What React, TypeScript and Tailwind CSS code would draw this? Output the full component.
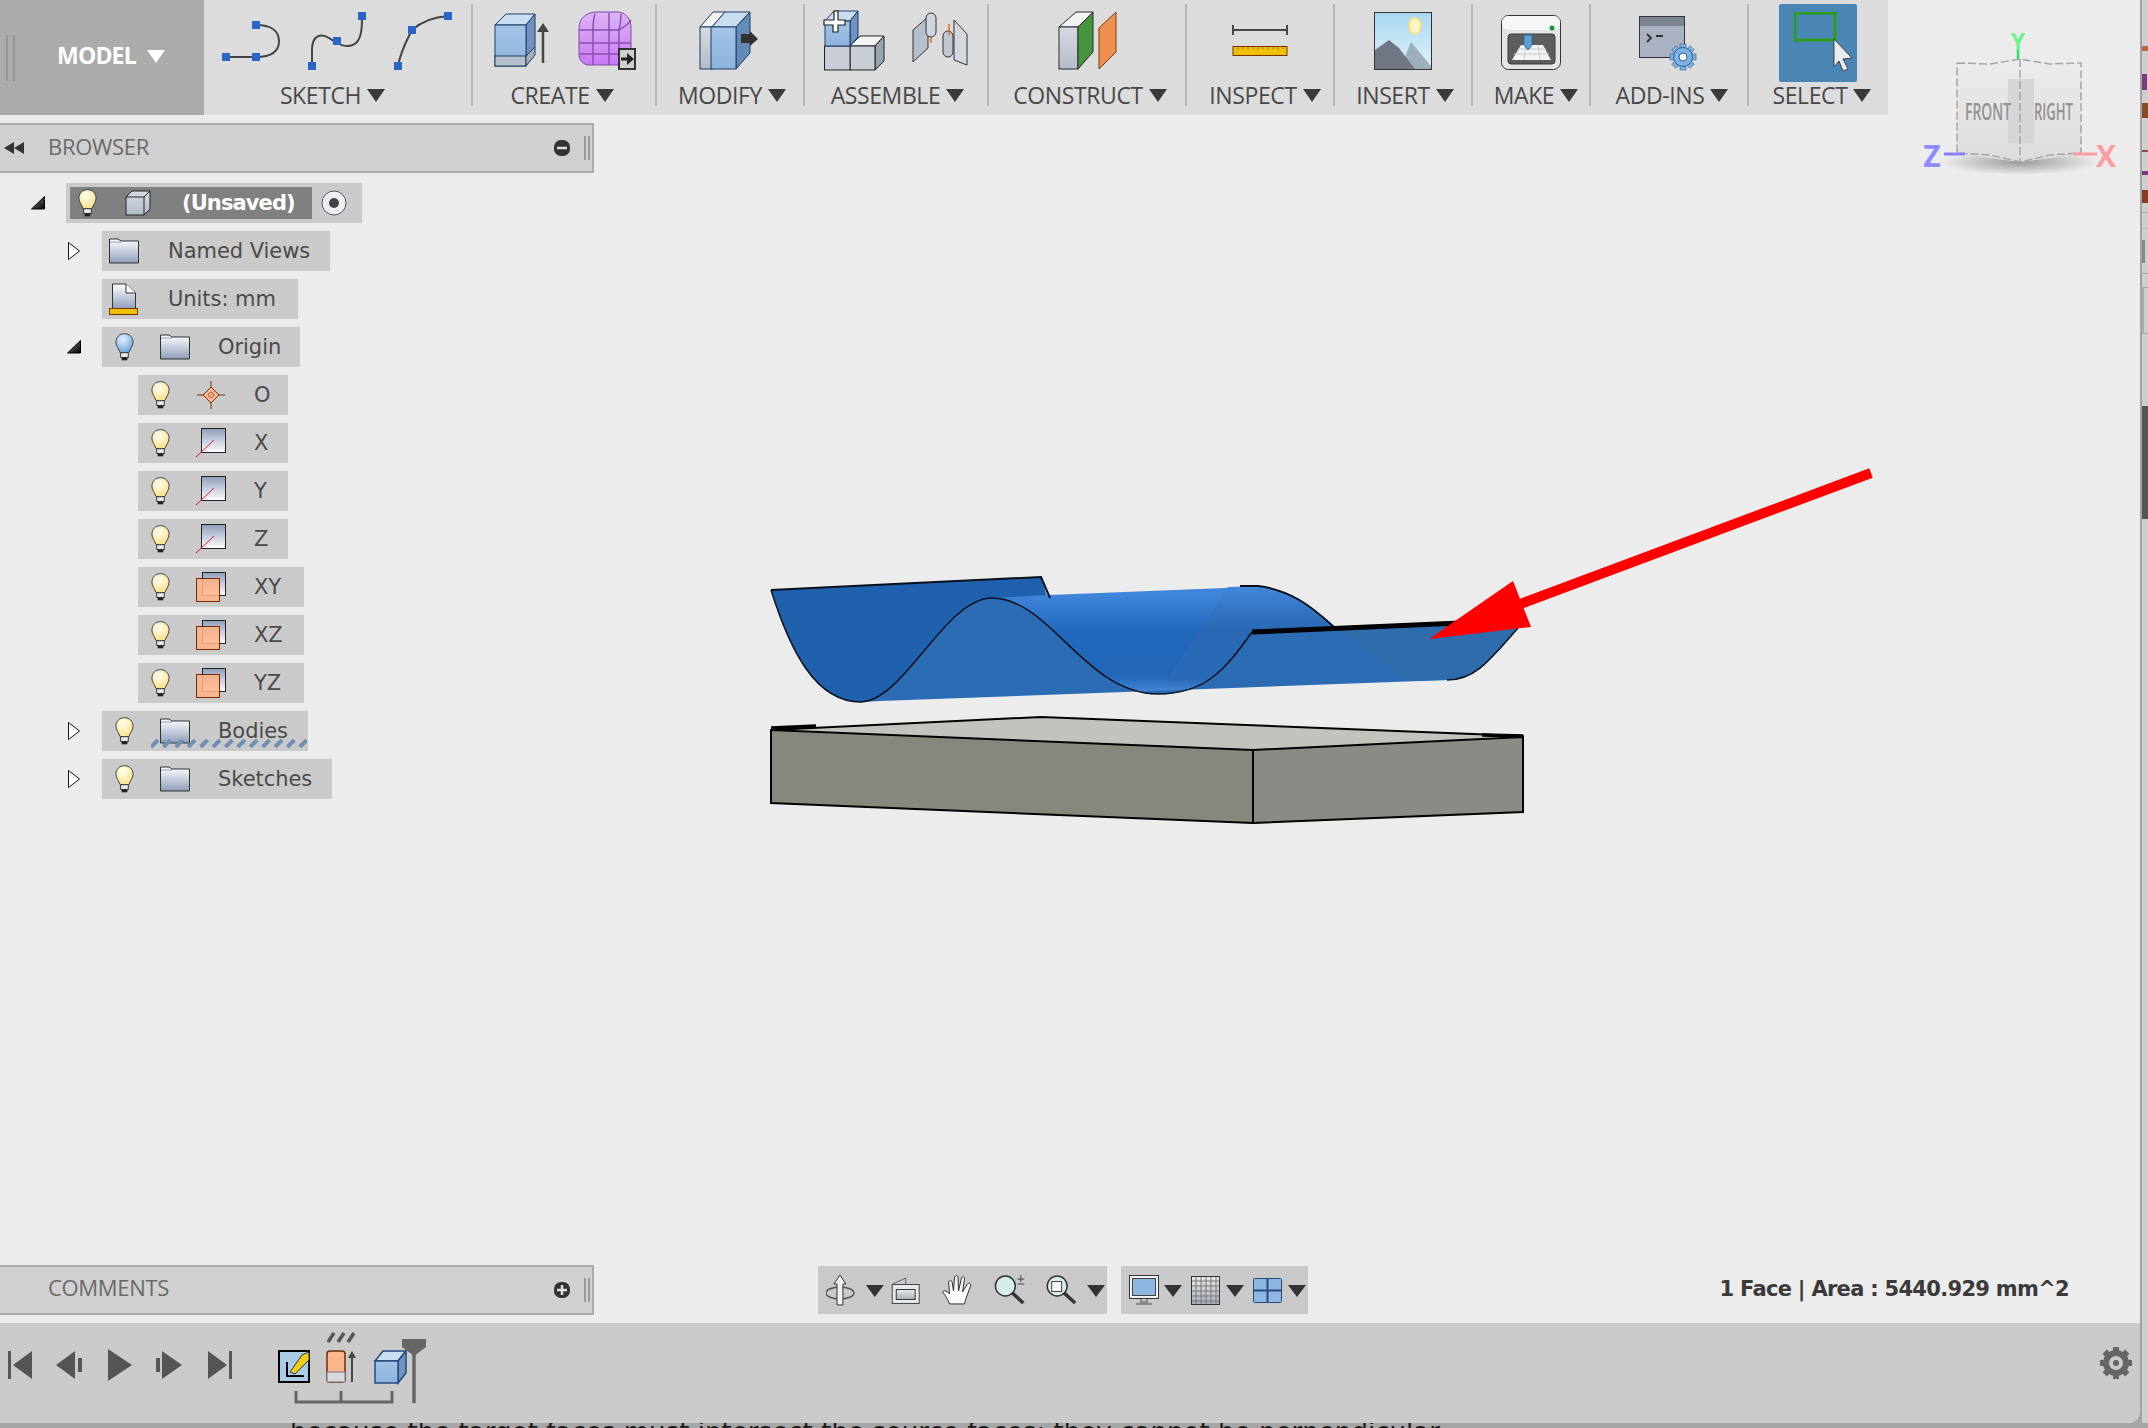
import type { ReactNode } from "react";

const Tri = ({ className = "" }: { className?: string }) => (
  <svg width="18" height="13" viewBox="0 0 18 13" className={className}>
    <polygon points="0,0 18,0 9,13" fill="#3a3a3a" />
  </svg>
);

const Sep = () => <div className="w-[2px] h-[102px] mt-1 bg-[#b6b6b6] shrink-0" />;

const Tool = ({ label, width, shift, children }: { label: string; width: string; shift: string; children: ReactNode }) => (
  <div className={`flex flex-col items-center shrink-0 ${width}`}>
    <div className="h-[83px] flex justify-center w-full">{children}</div>
    <div className={`flex items-center h-6 gap-[6px] ${shift}`}>
      <span className="text-[23px] leading-6 text-[#484848] font-['Open_Sans',sans-serif] tracking-[-0.4px]">{label}</span>
      <Tri />
    </div>
  </div>
);

const Defs = () => (
  <svg width="0" height="0" className="absolute">
    <defs>
      <radialGradient id="bulbY" cx="40%" cy="30%" r="70%">
        <stop offset="0" stopColor="#fffff4" />
        <stop offset="1" stopColor="#fbe38a" />
      </radialGradient>
      <radialGradient id="bulbB" cx="40%" cy="30%" r="70%">
        <stop offset="0" stopColor="#e4f2ff" />
        <stop offset="1" stopColor="#6ea7dc" />
      </radialGradient>
      <linearGradient id="fold" x1="0" y1="0" x2="0" y2="1">
        <stop offset="0" stopColor="#ffffff" />
        <stop offset="1" stopColor="#8f9db8" />
      </linearGradient>
      <linearGradient id="plane" x1="0" y1="0" x2="0" y2="1">
        <stop offset="0" stopColor="#8f9db8" />
        <stop offset="1" stopColor="#ffffff" />
      </linearGradient>
      <linearGradient id="blueFront" x1="0" y1="0" x2="0" y2="1">
        <stop offset="0" stopColor="#a3c4e6" />
        <stop offset="1" stopColor="#8db3dc" />
      </linearGradient>
      <linearGradient id="grayFront" x1="0" y1="0" x2="0" y2="1">
        <stop offset="0" stopColor="#d6dae0" />
        <stop offset="1" stopColor="#b4bcc8" />
      </linearGradient>
      <linearGradient id="purple" x1="0" y1="0" x2="0" y2="1">
        <stop offset="0" stopColor="#dcb4f4" />
        <stop offset="1" stopColor="#c878f4" />
      </linearGradient>
      <linearGradient id="sky" x1="0" y1="0" x2="0" y2="1">
        <stop offset="0" stopColor="#a8d9f2" />
        <stop offset="1" stopColor="#dff1fa" />
      </linearGradient>
      <linearGradient id="midSurf" gradientUnits="userSpaceOnUse" x1="0" y1="595" x2="0" y2="696">
        <stop offset="0" stopColor="#3f86da" />
        <stop offset="0.35" stopColor="#2268bd" />
        <stop offset="0.8" stopColor="#2166b8" />
        <stop offset="1" stopColor="#4e8ee0" />
      </linearGradient>
      <linearGradient id="midRight" gradientUnits="userSpaceOnUse" x1="0" y1="585" x2="0" y2="696">
        <stop offset="0" stopColor="#4187da" />
        <stop offset="0.4" stopColor="#2a68b4" />
        <stop offset="0.85" stopColor="#2a6ab8" />
        <stop offset="1" stopColor="#5490de" />
      </linearGradient>
      <linearGradient id="cube" x1="0" y1="0" x2="0" y2="1">
        <stop offset="0" stopColor="#ececec" />
        <stop offset="1" stopColor="#dcdcdc" />
      </linearGradient>
      <radialGradient id="cubeShadow" cx="50%" cy="50%" r="50%">
        <stop offset="0" stopColor="#9a9a9a" />
        <stop offset="1" stopColor="#ececec" />
      </radialGradient>
      <linearGradient id="screen" x1="0" y1="0" x2="0" y2="1">
        <stop offset="0" stopColor="#e9e9e9" />
        <stop offset="1" stopColor="#a8adb8" />
      </linearGradient>
    </defs>
  </svg>
);

const SketchIcons = () => (
  <svg width="234" height="62" viewBox="222 10 234 62" className="mt-[10px]" fill="none">
    <g stroke="#444" strokeWidth="2">
      <path d="M227 57H257C275 57 280 50 280 41C280 31 272 25 257 25" />
      <path d="M313 66V50C313 35 322 33 330 38C340 45 350 50 358 42C363 36 363 25 363 16" />
      <path d="M399 66C402 50 408 40 413 30C422 22 435 17 449 16" />
    </g>
    <g fill="#2a66c8">
      <rect x="223" y="53" width="8" height="8" />
      <rect x="253" y="53" width="8" height="8" />
      <rect x="253" y="21" width="8" height="8" />
      <rect x="309" y="62" width="8" height="8" />
      <rect x="334" y="37" width="8" height="8" />
      <rect x="359" y="12" width="8" height="8" />
      <rect x="395" y="62" width="8" height="8" />
      <rect x="409" y="26" width="8" height="8" />
      <rect x="445" y="12" width="8" height="8" />
    </g>
  </svg>
);

const CreateIcons = () => (
  <svg width="146" height="62" viewBox="494 10 146 62" className="mt-[10px] ml-[3px]" fill="none">
    <g stroke="#1c3d66" strokeWidth="1">
      <polygon points="496,25 507,14 536,14 527,25" fill="#cbdef1" />
      <polygon points="527,25 536,14 536,47 527,58" fill="#6f92bf" />
      <rect x="496" y="25" width="31" height="41" fill="url(#blueFront)" />
      <rect x="496" y="56" width="31" height="10" fill="#b7c0cc" />
      <polygon points="527,56 536,47 536,55 527,66" fill="#a3acb8" />
    </g>
    <path d="M544 63V28" stroke="#444" strokeWidth="2.5" />
    <polygon points="544,23 550,32 538,32" fill="#444" />
    <path d="M580 28C580 18 588 12 598 12H618C627 12 632 19 632 28V52C632 60 627 65 620 65H590C584 65 580 60 580 54Z" fill="url(#purple)" stroke="#7d4aa6" />
    <g stroke="#8a4fb0" strokeWidth="1.5">
      <path d="M580 30H620C626 26 630 24 632 20M580 43H632M581 54H620M596 14C594 20 594 26 594 30V65M610 13V65M622 14C622 20 621 26 620 30V60" />
    </g>
    <rect x="620" y="49" width="16" height="20" fill="#cfcfcf" stroke="#333" strokeWidth="2" />
    <path d="M622 59H630" stroke="#222" strokeWidth="3" />
    <polygon points="628,53 635,59 628,65" fill="#222" />
  </svg>
);

const ModifyIcon = () => (
  <svg width="62" height="62" viewBox="700 10 62 62" className="mt-[10px]">
    <g stroke="#1c3d66" strokeWidth="1">
      <polygon points="701,27 714,12 726,12 713,27" fill="#f4f4f4" />
      <rect x="701" y="27" width="12" height="42" fill="url(#grayFront)" />
      <polygon points="713,27 726,12 751,12 737,27" fill="#cbdef1" />
      <polygon points="737,27 751,12 751,53 737,69" fill="#648ab8" />
      <rect x="712" y="27" width="25" height="42" fill="url(#blueFront)" />
    </g>
    <polygon points="742,34 751,34 751,31 759,39 751,46 751,43 742,43" fill="#333" />
  </svg>
);

const AssembleIcons = () => (
  <svg width="146" height="62" viewBox="823 12 146 62" className="mt-[10px]">
    <g stroke="#222" strokeWidth="1">
      <polygon points="850,48 860,38 884,38 875,48" fill="#f3f4f6" />
      <polygon points="875,48 884,38 884,63 875,72" fill="#98a4ae" />
      <rect x="850" y="48" width="25" height="24" fill="#c9ced6" />
      <rect x="824.500" y="48" width="25.500" height="24" fill="#c9ced6" />
    </g>
    <g stroke="#1c3d66" strokeWidth="1">
      <polygon points="825,23 834,13 858,13 850,23" fill="#cbdef1" />
      <polygon points="850,23 858,13 858,39 850,48" fill="#6f92bf" />
      <rect x="825" y="23" width="25" height="25" fill="url(#blueFront)" />
    </g>
    <path d="M834 13H838V22H845V27H838V34H833V27H824V22H834Z" fill="#fff" stroke="#222" strokeWidth="1.200" />
    <g stroke="#333" strokeWidth="1">
      <polygon points="913,32 928,19 928,50 913,64" fill="#b6bfcb" />
      <rect x="926" y="15" width="10" height="24" rx="5" fill="#cfd5de" />
      <polygon points="954,22 967,36 967,67 954,62" fill="#d4d8de" />
      <rect x="943" y="33" width="10" height="26" rx="5" fill="#c0c7d2" />
    </g>
    <path d="M931 39V45M949 26V37" stroke="#e66a10" strokeWidth="1.500" />
  </svg>
);

const ConstructIcon = () => (
  <svg width="60" height="62" viewBox="1058 10 60 62" className="mt-[10px]">
    <g stroke="#2a2a2a" strokeWidth="1">
      <polygon points="1060,27 1077,12 1094,12 1079,27" fill="#f3f3f3" />
      <rect x="1060" y="27" width="19" height="42" fill="url(#grayFront)" />
      <polygon points="1079,27 1094,12 1094,52 1079,69" fill="#45953f" />
    </g>
    <polygon points="1100,28 1117,12 1117,52 1100,69" fill="#f0904f" stroke="#7a3a10" />
  </svg>
);

const InspectIcon = () => (
  <svg width="58" height="62" viewBox="1231 10 58 62" className="mt-[10px]">
    <path d="M1233 25V35M1287 25V35M1233 30H1287" stroke="#484848" strokeWidth="2" fill="none" />
    <rect x="1233" y="46.500" width="54" height="9" fill="#efc000" stroke="#7a3000" />
    <path d="M1238 47V50M1243 47V49M1248 47V50M1253 47V49M1258 47V50M1263 47V49M1268 47V50M1273 47V49M1278 47V50M1283 47V49" stroke="#a86a00" />
  </svg>
);

const InsertIcon = () => (
  <svg width="60" height="62" viewBox="1374 10 60 62" className="mt-[10px]">
    <rect x="1375.500" y="12.500" width="57" height="57" fill="url(#sky)" stroke="#333" />
    <ellipse cx="1416" cy="26" rx="6" ry="8" fill="#fff6c4" stroke="#f4e08a" strokeWidth="2" />
    <polygon points="1401,69 1432,69 1432,66 1412,42" fill="#9eafbb" />
    <polygon points="1376,69 1376,50 1390,40 1400,48 1416,69" fill="#707684" />
  </svg>
);

const MakeIcon = () => (
  <svg width="62" height="62" viewBox="1501 10 62 62" className="mt-[10px]">
    <rect x="1502.500" y="15.500" width="59" height="54" rx="7" fill="#e4e4e4" stroke="#333" />
    <rect x="1503" y="16" width="58" height="14" rx="6" fill="#f6f6f6" />
    <circle cx="1553" cy="28" r="2.500" fill="#129a3a" />
    <rect x="1509" y="34" width="47" height="30" rx="3" fill="#5d5d5d" stroke="#3a3a3a" />
    <polygon points="1522,45 1544,45 1552,60 1513,60" fill="#f4f4f4" />
    <path d="M1515 54H1550M1519 49H1547M1527 45L1525 60M1539 45L1541 60" stroke="#c9c9c9" />
    <polygon points="1525,35 1533,35 1533,45 1529,50 1525,45" fill="#5ba0d6" stroke="#2e6ea0" />
  </svg>
);

const AddInsIcon = () => {
  const teeth = [0, 45, 90, 135, 180, 225, 270, 315];
  return (
    <svg width="62" height="62" viewBox="1640 10 62 62" className="mt-[10px]">
      <rect x="1641.500" y="16.500" width="45" height="41" fill="#aab1c2" stroke="#333" />
      <rect x="1642" y="17" width="44" height="9" fill="#7c8492" />
      <path d="M1649 34L1653 38L1649 42M1658 36H1665" stroke="#333" strokeWidth="1.800" fill="none" />
      {teeth.map((a) => (
        <rect key={a} x="1682" y="44" width="6" height="6" fill="#7db1e2" stroke="#2f5f94" strokeWidth="0.600" transform={`rotate(${a} 1685 57)`} />
      ))}
      <circle cx="1685" cy="57" r="9.500" fill="#7db1e2" stroke="#2f5f94" />
      <circle cx="1685" cy="57" r="4" fill="#fff" stroke="#2f5f94" />
    </svg>
  );
};

const SelectIcon = () => (
  <div className="w-[78px] h-[78px] mt-1 mr-[2px] bg-[#4986b5] rounded-[2px] flex justify-center pl-[10px] pt-2">
    <svg width="58" height="62" viewBox="1789 12 58 62">
      <rect x="1790" y="13" width="40" height="27" fill="none" stroke="#2e9e1a" strokeWidth="3" />
      <polygon points="1829,39 1847,58 1838,59 1843,69 1838,71 1834,61 1829,67" fill="#e8ecf0" stroke="#444" />
    </svg>
  </div>
);

const Bulb = ({ blue = false }: { blue?: boolean }) => (
  <svg width="19" height="30" viewBox="0 0 20 30" className="shrink-0">
    <path d="M10 1C4.500 1 1 5 1 10C1 14 4 17 5.500 21H14.500C16 17 19 14 19 10C19 5 15.500 1 10 1Z" fill={blue ? "url(#bulbB)" : "url(#bulbY)"} stroke="#3c3c3c" />
    <rect x="6" y="21" width="8" height="5" fill="#e9e9e9" stroke="#333" />
    <rect x="7" y="26" width="6" height="3" fill="#222" />
  </svg>
);

const Folder = () => (
  <svg width="30" height="26" viewBox="0 0 30 26" className="shrink-0">
    <path d="M0.500 1H9L12 3H29.500V25H0.500Z" fill="url(#fold)" stroke="#333" />
    <path d="M1 4H12" stroke="#8f9db8" />
  </svg>
);

const DocIcon = () => (
  <svg width="30" height="32" viewBox="0 0 30 32" className="shrink-0">
    <path d="M3.500 1H17L26.500 10V26H3.500Z" fill="url(#fold)" stroke="#333" />
    <path d="M17 1V10H26.500" fill="#fff" stroke="#333" />
    <rect x="0.500" y="25.500" width="28" height="6" fill="#efc000" stroke="#7a3000" />
  </svg>
);

const PointIcon = () => (
  <svg width="30" height="28" viewBox="0 0 30 28" className="shrink-0">
    <path d="M1 14H29M15 0V28" stroke="#7a3010" />
    <polygon points="15,6 23,14 15,22 7,14" fill="#f9b58e" stroke="#7a3010" />
    <circle cx="15" cy="14" r="2.500" fill="none" stroke="#b9623a" />
  </svg>
);

const AxisIcon = () => (
  <svg width="30" height="30" viewBox="0 0 30 30" className="shrink-0">
    <rect x="5.500" y="0.500" width="24" height="24" fill="url(#plane)" stroke="#222" />
    <path d="M0 29L18 12" stroke="#e8141c" />
  </svg>
);

const PlaneIcon = () => (
  <svg width="30" height="30" viewBox="0 0 30 30" className="shrink-0">
    <rect x="6.500" y="0.500" width="23" height="23" fill="url(#plane)" stroke="#222" />
    <rect x="0.500" y="6.500" width="23" height="23" fill="#ffb186" fillOpacity="0.85" stroke="#742800" />
  </svg>
);

const ArrowClosed = () => (
  <svg width="14" height="14" viewBox="0 0 14 14">
    <defs>
      <linearGradient id="arr" x1="0" y1="0" x2="1" y2="1">
        <stop offset="0" stopColor="#888" />
        <stop offset="1" stopColor="#000" />
      </linearGradient>
    </defs>
    <polygon points="13.500,0.500 13.500,13 0.500,13" fill="url(#arr)" stroke="#000" />
  </svg>
);

const ArrowOpen = () => (
  <svg width="12" height="18" viewBox="0 0 12 18">
    <polygon points="0.500,0.500 11.500,9 0.500,17.500" fill="#fff" stroke="#111" />
  </svg>
);

const dashes = [0, 12.4, 24.8, 37.2, 49.6, 62, 74.4, 86.8, 99.2, 111.6, 124, 136.4, 148.8];

const TreeRow = ({ slot, width, arrow, bulb, blue, icon, label, iconOnly }: { slot: string; width: string; arrow?: ReactNode; bulb?: boolean; blue?: boolean; icon: ReactNode; label: string; iconOnly?: boolean }) => (
  <div className="flex items-center h-10">
    <div className={`flex justify-end shrink-0 ${slot}`}>{arrow}</div>
    <div className={`relative flex items-center h-10 bg-[#cacaca] shrink-0 ${width} ${iconOnly ? "pl-[7px]" : "pl-[13px]"}`}>
      {bulb && <Bulb blue={blue} />}
      <div className={`w-[30px] flex justify-center shrink-0 ${iconOnly ? "" : "ml-[26px]"}`}>{icon}</div>
      <span className={`text-[21px] pt-[2px] text-[#4a4a4a] font-['DejaVu_Sans',sans-serif] tracking-[-0.05px] ${iconOnly ? "ml-[29px]" : "ml-[28px]"}`}>{label}</span>
      {label === "Bodies" && (
        <svg width="156" height="9" viewBox="0 0 156 9" className="absolute left-[49px] bottom-[3px]">
          {dashes.map((x) => (
            <path key={x} d={`M${x} 8L${x + 7} 1`} stroke="#6f8fb5" strokeWidth="4" />
          ))}
        </svg>
      )}
    </div>
  </div>
);

const PanelHeader = ({ title, plus, rewind }: { title: string; plus?: boolean; rewind?: boolean }) => (
  <div className="flex items-center w-[594px] h-[50px] bg-[#d0d0d0] border-y-2 border-r-2 border-[#ababab] relative">
    <div className="w-[48px] flex justify-start pl-[4px] shrink-0">
      {rewind && (
        <svg width="20" height="12" viewBox="0 0 20 12">
          <polygon points="0,6 10,0 10,12" fill="#333" />
          <polygon points="10,6 20,0 20,12" fill="#333" />
        </svg>
      )}
    </div>
    <span className={`text-[22px] text-[#6a6a6a] font-['Open_Sans',sans-serif] tracking-[-0.3px] ${plus ? "pb-[6px]" : "pb-[3px]"}`}>{title}</span>
    <svg width="18" height="18" viewBox="0 0 18 18" className="ml-auto mr-[13px]">
      <rect x="1" y="1" width="16" height="16" rx="7" fill="#333" />
      <path d={plus ? "M4 9H14M9 4V14" : "M4 9H14"} stroke="#ddd" strokeWidth="2.500" />
    </svg>
    <div className="w-[6px] h-[24px] border-x-2 border-[#999] mr-[2px]" />
  </div>
);

const NavIcons = () => (
  <div className="flex items-center w-[289px] h-[48px] bg-[#c9c9c9] shrink-0 ml-[224px]">
    <svg width="282" height="32" viewBox="826 1274 282 32" className="ml-2" fill="none">
      <ellipse cx="840" cy="1293" rx="14" ry="6" stroke="#555" strokeWidth="1.500" />
      <polygon points="840,1275 846,1284 843,1284 843,1305 837,1305 837,1284 834,1284" fill="#eef0f3" stroke="#333" />
      <polygon points="866,1285 884,1285 875,1297" fill="#333" />
      <path d="M893 1284L906 1278L906 1284" stroke="#666" fill="#c6cad2" />
      <rect x="892.500" y="1284.500" width="27" height="19" fill="#e9e9e9" stroke="#444" />
      <rect x="896.500" y="1289.500" width="19" height="10" fill="url(#screen)" stroke="#333" />
      <path d="M950 1304C948 1298 945 1295 943 1292C945 1289 948 1292 950 1294L949 1282C950 1280 952 1280 952.500 1282L954 1291L955 1277C956 1275 958 1275 958.500 1277L959 1291L962 1278C963 1276 965 1276 965 1279L963 1292L968 1284C970 1282 972 1284 971 1286L966 1300L965 1304Z" fill="#fafafa" stroke="#333" />
      <circle cx="1006" cy="1286" r="10" fill="#d8ecec" stroke="#333" strokeWidth="1.500" />
      <path d="M1013 1293L1024 1303" stroke="#333" strokeWidth="3.500" />
      <path d="M1018 1279H1025M1021.500 1275V1282M1018 1284H1025" stroke="#444" />
      <circle cx="1058" cy="1286" r="10" fill="#d8ecec" stroke="#333" strokeWidth="1.500" />
      <rect x="1052.500" y="1281.500" width="10" height="10" fill="#f5f5f5" stroke="#444" />
      <path d="M1065 1293L1076 1303" stroke="#333" strokeWidth="3.500" />
      <polygon points="1088,1285 1106,1285 1097,1297" fill="#333" />
    </svg>
  </div>
);

const ViewIcons = () => {
  const lines = [1196, 1201, 1206, 1211, 1216];
  const rows = [1281, 1286, 1291, 1296, 1301];
  return (
    <div className="flex items-center w-[187px] h-[48px] bg-[#c9c9c9] shrink-0 ml-[14px]">
      <svg width="178" height="32" viewBox="1129 1274 178 32" className="ml-2" fill="none">
        <rect x="1129.500" y="1275.500" width="29" height="23" fill="#f2f2f2" stroke="#333" />
        <rect x="1132.500" y="1278.500" width="23" height="17" fill="#8db6e0" stroke="#444" />
        <path d="M1141 1299V1302H1147V1299M1136 1304H1152" stroke="#888" strokeWidth="2" />
        <polygon points="1164,1285 1182,1285 1173,1297" fill="#333" />
        <rect x="1191.500" y="1276.500" width="28" height="28" fill="url(#screen)" stroke="#333" />
        {lines.map((x) => (
          <path key={x} d={`M${x} 1277V1304`} stroke="#777" />
        ))}
        {rows.map((y) => (
          <path key={y} d={`M1192 ${y}H1219`} stroke="#777" />
        ))}
        <polygon points="1226,1285 1244,1285 1235,1297" fill="#333" />
        <rect x="1253.500" y="1278.500" width="28" height="24" rx="1" fill="#8db6e0" stroke="#274a80" />
        <path d="M1267.500 1278V1303M1253 1290.500H1282" stroke="#274a80" strokeWidth="2" />
        <polygon points="1288,1285 1306,1285 1297,1297" fill="#333" />
      </svg>
    </div>
  );
};

const Scene = () => (
  <svg width="2140" height="1208" viewBox="0 115 2140 1208" className="absolute left-0 top-0 overflow-visible" fill="none">
    {/* surface */}
    <path d="M771 590L1041 577L1052 612L992 598C945 598 905 700 861 702C815 702 790 650 771 590Z" fill="#2061ae" />
    <path d="M992 598L1049 595L1225 588L1258 586C1290 590 1310 605 1334 627L1252 632C1225 670 1205 694 1158 694C1085 694 1050 598 992 598Z" fill="url(#midSurf)" />
    <path d="M1228 587L1258 586C1290 590 1310 605 1334 627L1252 632C1225 670 1205 694 1158 694Z" fill="url(#midRight)" />
    <path d="M861 702C905 700 945 598 992 598C1050 598 1085 694 1158 694C1205 694 1225 670 1252 632L1460 625L1518 628C1490 660 1475 680 1447 680L880 701Z" fill="#2b6cb4" />
    <path d="M1337 630L1518 628C1490 660 1475 680 1447 680L1408 681Z" fill="#2f6cab" />
    <g stroke="#06101c" strokeWidth="1.500">
      <path d="M771 590L1041 577L1050 598" strokeWidth="2" />
      <path d="M771 590C790 650 815 702 861 702C905 700 945 598 992 598C1050 598 1085 694 1158 694C1205 694 1225 670 1252 632" />
      <path d="M1240 586H1258C1290 590 1310 605 1334 627" strokeWidth="2" />
      <path d="M1518 628C1490 660 1475 680 1447 680" />
    </g>
    <path d="M1252 632L1460 623" stroke="#000" strokeWidth="5" />
    {/* block */}
    <polygon points="771,730 1041,717 1523,736 1253,750" fill="#c1c3bc" />
    <polygon points="771,730 1253,750 1253,823 771,803" fill="#87877e" />
    <polygon points="1253,750 1523,737 1523,812 1253,823" fill="#8a8b84" />
    <path d="M771 730L1041 717L1523 736V812L1253 823L771 803V730L1253 750L1523 737M1253 750V823" stroke="#000" strokeWidth="2" />
    <path d="M771 728L816 726M1482 735L1523 736" stroke="#000" strokeWidth="3.500" />
    {/* arrow */}
    <path d="M1515 606L1871 473" stroke="#ff0000" strokeWidth="10" />
    <polygon points="1429,639 1513,581 1531,627" fill="#ff0000" />
    {/* view cube */}
    <ellipse cx="2020" cy="162" rx="78" ry="13" fill="url(#cubeShadow)" />
    <path d="M1957 63L1990 64L2020 59L2050 64L2081 63V153L2050 158L2020 162L1990 158L1957 153Z" fill="url(#cube)" />
    <rect x="2008" y="79" width="26" height="64" fill="#d6d6d6" />
    <path d="M1957 63L1990 64L2020 59L2050 64L2081 63V153L2050 155L2020 162L1990 155L1957 153ZM2020 59V162" stroke="#a6a6a6" strokeWidth="1.500" strokeDasharray="8 3" />
    <text x="1965" y="120" fontFamily="Open Sans, sans-serif" fontWeight="600" fontSize="24" fill="#929292" textLength="46" lengthAdjust="spacingAndGlyphs">FRONT</text>
    <text x="2034" y="120" fontFamily="Open Sans, sans-serif" fontWeight="600" fontSize="24" fill="#929292" textLength="39" lengthAdjust="spacingAndGlyphs">RIGHT</text>
    <path d="M2018 50V59" stroke="#2fe060" strokeWidth="2.500" />
    <text x="2018" y="50" textAnchor="middle" fontFamily="Open Sans, sans-serif" fontWeight="700" fontSize="23" fill="#6cf48c">Y</text>
    <path d="M1944 154H1965" stroke="#8a80ff" strokeWidth="3" />
    <text x="1932" y="167" textAnchor="middle" fontFamily="Open Sans, sans-serif" fontWeight="700" fontSize="30" fill="#8f8cff">Z</text>
    <path d="M2073 154H2097" stroke="#ff9ca4" strokeWidth="3" />
    <text x="2106" y="167" textAnchor="middle" fontFamily="Open Sans, sans-serif" fontWeight="700" fontSize="30" fill="#ff9ca4">X</text>
  </svg>
);

const Viewport = () => (
  <div className="relative flex-1 flex flex-col pt-2 pb-2 min-h-0">
    <Scene />
    <div className="relative">
      <PanelHeader title="BROWSER" rewind />
    </div>
    <div className="relative flex flex-col gap-2 mt-[10px]">
      <div className="flex items-center h-10">
        <div className="w-[66px] flex justify-end pr-[21px] shrink-0">
          <ArrowClosed />
        </div>
        <div className="flex items-center w-[296px] h-10 bg-[#cacaca] pl-1">
          <div className="flex items-center w-[242px] h-8 bg-[#808080] pl-2">
            <Bulb />
            <svg width="26" height="26" viewBox="0 0 26 26" className="ml-[28px]">
              <polygon points="1,7 7,1 25,1 25,19 19,25 1,25" fill="url(#grayFront)" stroke="#222" />
              <path d="M1 7H19V25M19 7L25 1" stroke="#222" fill="none" />
            </svg>
            <span className="ml-[31px] pt-[1px] text-[21px] font-bold text-white font-['DejaVu_Sans',sans-serif] tracking-[-0.9px]">(Unsaved)</span>
          </div>
          <svg width="26" height="26" viewBox="0 0 26 26" className="ml-[9px]">
            <circle cx="13" cy="13" r="12" fill="#eceef4" stroke="#555" />
            <circle cx="13" cy="13" r="5" fill="#444" />
          </svg>
        </div>
      </div>
      <TreeRow slot="w-[102px] pr-[22px]" width="w-[228px]" arrow={<ArrowOpen />} icon={<Folder />} label="Named Views" iconOnly />
      <TreeRow slot="w-[102px]" width="w-[196px]" icon={<DocIcon />} label="Units: mm" iconOnly />
      <TreeRow slot="w-[102px] pr-[21px]" width="w-[198px]" arrow={<ArrowClosed />} bulb blue icon={<Folder />} label="Origin" />
      <TreeRow slot="w-[138px]" width="w-[150px]" bulb icon={<PointIcon />} label="O" />
      <TreeRow slot="w-[138px]" width="w-[150px]" bulb icon={<AxisIcon />} label="X" />
      <TreeRow slot="w-[138px]" width="w-[150px]" bulb icon={<AxisIcon />} label="Y" />
      <TreeRow slot="w-[138px]" width="w-[150px]" bulb icon={<AxisIcon />} label="Z" />
      <TreeRow slot="w-[138px]" width="w-[166px]" bulb icon={<PlaneIcon />} label="XY" />
      <TreeRow slot="w-[138px]" width="w-[166px]" bulb icon={<PlaneIcon />} label="XZ" />
      <TreeRow slot="w-[138px]" width="w-[166px]" bulb icon={<PlaneIcon />} label="YZ" />
      <TreeRow slot="w-[102px] pr-[22px]" width="w-[206px]" arrow={<ArrowOpen />} bulb icon={<Folder />} label="Bodies" />
      <TreeRow slot="w-[102px] pr-[22px]" width="w-[230px]" arrow={<ArrowOpen />} bulb icon={<Folder />} label="Sketches" />
    </div>
    <div className="relative mt-auto flex items-center">
      <PanelHeader title="COMMENTS" plus />
      <NavIcons />
      <ViewIcons />
      <span className="ml-auto mr-[71px] text-[21px] font-bold text-[#3a3a3a] font-['DejaVu_Sans',sans-serif] tracking-[-0.7px]">1 Face | Area : 5440.929 mm^2</span>
    </div>
  </div>
);

const Timeline = () => {
  const teeth = [0, 45, 90, 135, 180, 225, 270, 315];
  return (
    <div className="flex h-[100px] bg-[#cacaca] shrink-0">
      <svg width="226" height="34" viewBox="8 1348 226 34" className="ml-2 mt-[25px]">
        <g fill="#555">
          <rect x="8" y="1351" width="3" height="28" />
          <polygon points="32,1351 32,1379 13,1365" />
          <polygon points="75,1351 75,1379 56,1365" />
          <rect x="78" y="1358" width="4" height="14" />
          <polygon points="108,1349 132,1365 108,1381" />
          <rect x="156" y="1358" width="4" height="14" />
          <polygon points="162,1351 182,1365 162,1379" />
          <polygon points="208,1351 227,1365 208,1379" />
          <rect x="229" y="1351" width="3" height="28" />
        </g>
      </svg>
      <svg width="152" height="76" viewBox="278 1330 152 76" className="ml-[44px] mt-[7px]" fill="none">
        <rect x="279" y="1351" width="30" height="31" fill="#a9cbe8" stroke="#000" strokeWidth="2" />
        <path d="M287 1362V1376H304" stroke="#000" strokeWidth="2" />
        <polygon points="290,1372 302,1355 309,1352 309,1360 295,1374" fill="#efcb1a" stroke="#333" />
        <rect x="327" y="1351" width="18" height="31" rx="3" fill="#fbb68c" stroke="#6e2c0a" strokeWidth="1.500" />
        <rect x="327" y="1372" width="18" height="10" fill="#d7d9de" stroke="#777" />
        <path d="M352 1382V1356" stroke="#444" strokeWidth="2" />
        <polygon points="352,1351 356,1358 348,1358" fill="#444" />
        <polygon points="375,1361 383,1351 406,1351 398,1361" fill="#cbdef1" stroke="#274a80" strokeWidth="1.500" />
        <polygon points="398,1361 406,1351 406,1373 398,1383" fill="#6f92bf" stroke="#274a80" strokeWidth="1.500" />
        <rect x="375" y="1361" width="23" height="22" fill="url(#blueFront)" stroke="#274a80" strokeWidth="1.500" />
        <path d="M296 1391V1402H392V1391M341 1391V1402" stroke="#666" strokeWidth="3" />
        <path d="M328 1342L334 1333M338 1342L344 1333M348 1342L354 1333" stroke="#555" strokeWidth="3.500" />
        <polygon points="402,1339 426,1339 426,1347 414,1356 402,1347" fill="#666" />
        <path d="M414 1350V1403" stroke="#666" strokeWidth="3.500" />
      </svg>
      <svg width="32" height="32" viewBox="0 0 32 32" className="ml-auto mr-2 mt-6">
        {teeth.map((a) => (
          <rect key={a} x="13" y="0" width="6" height="7" fill="#666" transform={`rotate(${a} 16 16)`} />
        ))}
        <circle cx="16" cy="16" r="10" fill="none" stroke="#666" strokeWidth="6" />
        <circle cx="16" cy="16" r="3" fill="#666" />
      </svg>
    </div>
  );
};

const RightStrip = () => (
  <div className="flex-1 flex flex-col bg-[#cfcfcf] border-l-2 border-[#a2a2a2]">
    <div className="h-[46px]" />
    <div className="h-[5px] bg-[#b8663a]" />
    <div className="h-[23px]" />
    <div className="h-[16px] w-[5px] bg-[#7a3a80]" />
    <div className="h-[13px]" />
    <div className="h-[15px] bg-[#8a4a20]" />
    <div className="h-[32px]" />
    <div className="h-[2px] bg-[#8a4a4a]" />
    <div className="h-[19px]" />
    <div className="h-[4px] bg-[#7a3a80]" />
    <div className="h-[15px]" />
    <div className="h-[13px] bg-[#8a3a20]" />
    <div className="h-[9px]" />
    <div className="h-px bg-[#aaa]" />
    <div className="h-[15px]" />
    <div className="h-px bg-[#bbb]" />
    <div className="h-[11px]" />
    <div className="h-[23px] w-[3px] bg-[#888]" />
    <div className="h-[10px]" />
    <div className="h-px bg-[#aaa]" />
    <div className="h-[13px]" />
    <div className="h-[47px] border-y border-l-2 border-[#aaa]" />
    <div className="h-[72px]" />
    <div className="h-[113px] bg-[#555]" />
  </div>
);

export default function App() {
  return (
    <div className="relative w-[2148px] h-[1428px] overflow-hidden bg-[#a6a6a6] flex flex-col">
      <Defs />
      <div className="flex h-[1423px] shrink-0">
        <div className="w-[2140px] flex flex-col bg-[#ececec] rounded-br-[12px] overflow-hidden shrink-0">
          <div className="flex w-[1888px] h-[115px] bg-[#dcdcdc] shrink-0">
            <div className="relative flex items-center w-[204px] bg-[#ababab] shrink-0 pl-[6px]">
              <div className="w-[9px] h-[46px] border-x-2 border-[#969696]" />
              <span className="ml-[42px] pb-[4px] text-[23px] font-bold text-white font-['Open_Sans',sans-serif] tracking-[-0.8px]">MODEL</span>
              <svg width="18" height="13" viewBox="0 0 18 13" className="ml-[11px] mb-[2px]">
                <polygon points="0,0 18,0 9,13" fill="#fff" />
              </svg>
            </div>
            <Tool label="SKETCH" width="w-[267px]" shift="mr-[10px]"><SketchIcons /></Tool>
            <Sep />
            <Tool label="CREATE" width="w-[182px]" shift="mr-[4px]"><CreateIcons /></Tool>
            <Sep />
            <Tool label="MODIFY" width="w-[146px]" shift="ml-[4px]"><ModifyIcon /></Tool>
            <Sep />
            <Tool label="ASSEMBLE" width="w-[182px]" shift="ml-[3px]"><AssembleIcons /></Tool>
            <Sep />
            <Tool label="CONSTRUCT" width="w-[196px]" shift="ml-[6px]"><ConstructIcon /></Tool>
            <Sep />
            <Tool label="INSPECT" width="w-[146px]" shift="ml-[10px]"><InspectIcon /></Tool>
            <Sep />
            <Tool label="INSERT" width="w-[136px]" shift="ml-[4px]"><InsertIcon /></Tool>
            <Sep />
            <Tool label="MAKE" width="w-[116px]" shift="ml-[10px]"><MakeIcon /></Tool>
            <Sep />
            <Tool label="ADD-INS" width="w-[156px]" shift="ml-[6px]"><AddInsIcon /></Tool>
            <Sep />
            <Tool label="SELECT" width="w-[139px]" shift="ml-[7px]"><SelectIcon /></Tool>
          </div>
          <Viewport />
          <Timeline />
        </div>
        <RightStrip />
      </div>
      <div className="h-[5px] overflow-hidden pl-[290px]">
        <p className="text-[26px] tracking-[0.05px] leading-6 -mt-[3px] text-[#1c1c1c] whitespace-nowrap font-['DejaVu_Sans',sans-serif]">because the target faces must intersect the source faces; they cannot be perpendicular</p>
      </div>
    </div>
  );
}
